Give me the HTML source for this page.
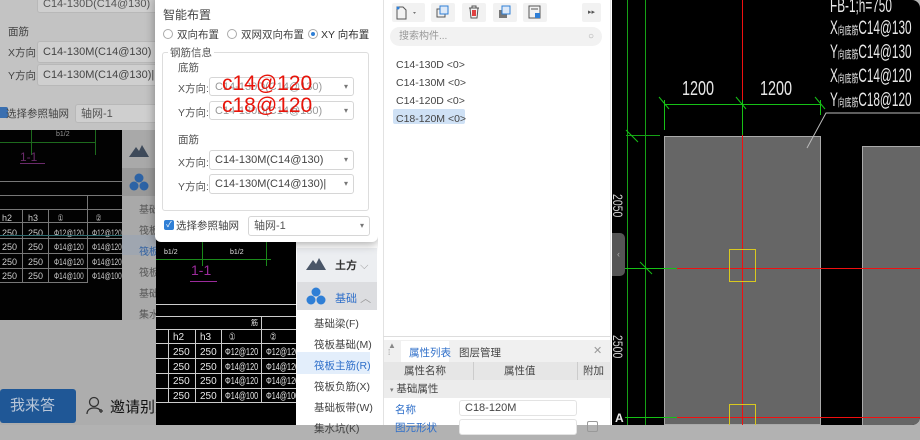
<!DOCTYPE html>
<html><head><meta charset="utf-8">
<style>
*{margin:0;padding:0;box-sizing:border-box;white-space:nowrap}
body{width:920px;height:425px;overflow:hidden;position:relative;background:#b2b2b2;font-family:"Liberation Sans","Noto Sans CJK SC",sans-serif;font-size:11px;color:#333}
.a{position:absolute}
.inp{position:absolute;background:#fff;border:1px solid #d6d6d6;border-radius:3px;font-size:11px;color:#444;padding-left:5px;line-height:18px;overflow:hidden}
.inp.s::after{content:"▾";position:absolute;right:5px;top:0;font-size:8px;color:#777}
.lbl{position:absolute;font-size:10.5px;color:#555}
.cad{position:absolute;background:#000;overflow:hidden}
.w{color:#e8e8e8;font-family:"Liberation Sans Narrow","Liberation Sans",sans-serif}
.nar{transform:scaleX(.72);transform-origin:left top}
</style></head><body>

<!-- dimmed left area -->
<div class="a" style="left:0;top:0;width:160px;height:130px;background:#c3c3c3"></div>
<div class="inp" style="left:37px;top:-6px;width:125px;height:19px;background:#cfcfcf;border-color:#b8b8b8;color:#555">C14-130D(C14@130)</div>
<div class="lbl" style="left:8px;top:24px;color:#444">面筋</div>
<div class="lbl" style="left:8px;top:45px;color:#444">X方向:</div>
<div class="inp" style="left:37px;top:41px;width:125px;height:22px;background:#cfcfcf;border-color:#b8b8b8;color:#444;line-height:20px">C14-130M(C14@130)</div>
<div class="lbl" style="left:8px;top:68px;color:#444">Y方向:</div>
<div class="inp" style="left:37px;top:64px;width:125px;height:22px;background:#cfcfcf;border-color:#b8b8b8;color:#444;line-height:20px">C14-130M(C14@130)|</div>
<div class="a" style="left:-3px;top:107px;width:11px;height:11px;background:#3a6fb0;border-radius:2px"></div>
<div class="lbl" style="left:6px;top:106px;color:#444">选择参照轴网</div>
<div class="inp" style="left:75px;top:104px;width:90px;height:19px;background:#cfcfcf;border-color:#b8b8b8;color:#555">轴网-1</div>

<div class="cad" style="left:0;top:130px;width:122px;height:190px;background:#020202">
  <div class="a" style="left:31px;top:0;width:1px;height:25px;background:#1d6a1d"></div>
  <div class="a" style="left:95px;top:0;width:1px;height:25px;background:#1d6a1d"></div>
  <div class="a" style="left:0;top:12px;width:95px;height:1px;background:#1d6a1d"></div>
  <div class="a w" style="left:56px;top:1px;font-size:7px;color:#999">b1/2</div>
  <div class="a" style="left:20px;top:20px;font-size:12px;color:#6b2b6b">1-1</div>
  <div class="a" style="left:20px;top:33px;width:25px;height:1px;background:#6b2b6b"></div>
  <div class="a" style="left:0;top:51px;width:122px;height:1px;background:#777"></div>
  <div class="a" style="left:0;top:65px;width:122px;height:1px;background:#777"></div>
  <div class="a" style="left:0;top:79px;width:122px;height:1px;background:#777"></div>
  <div class="a" style="left:0;top:92px;width:122px;height:1px;background:#777"></div>
  <div class="a" style="left:0;top:108px;width:122px;height:1px;background:#777"></div>
  <div class="a" style="left:0;top:123px;width:122px;height:1px;background:#777"></div>
  <div class="a" style="left:0;top:138px;width:122px;height:1px;background:#777"></div>
  <div class="a" style="left:0;top:152px;width:88px;height:1px;background:#777"></div>
  <div class="a" style="left:22px;top:79px;width:1px;height:73px;background:#777"></div>
  <div class="a" style="left:48px;top:79px;width:1px;height:73px;background:#777"></div>
  <div class="a" style="left:87px;top:65px;width:1px;height:87px;background:#777"></div>
  <div class="a w" style="left:2px;top:81px;font-size:9px;line-height:14.5px;color:#ccc">h2<br>250<br>250<br>250<br>250</div>
  <div class="a w" style="left:28px;top:81px;font-size:9px;line-height:14.5px;color:#ccc">h3<br>250<br>250<br>250<br>250</div>
  <div class="a w nar" style="left:54px;top:81px;font-size:9px;line-height:14.5px;color:#ccc">&nbsp;&nbsp;①<br>Φ12@120<br>Φ14@120<br>Φ14@120<br>Φ14@100</div>
  <div class="a w nar" style="left:92px;top:81px;font-size:9px;line-height:14.5px;color:#ccc">&nbsp;&nbsp;②<br>Φ12@120<br>Φ14@120<br>Φ14@120<br>Φ14@100</div>
</div>
<div class="a" style="left:0;top:235px;width:122px;height:1px;background:#2d6b70"></div>
<div class="a" style="left:122px;top:130px;width:38px;height:190px;background:#a9a9a9"></div>
<div class="a" style="left:122px;top:168px;width:38px;height:28px;background:#999"></div>
<svg class="a" style="left:129px;top:144px" width="20" height="14" viewBox="0 0 20 14"><path d="M0 13L7 3l3 4 3-6 7 12z" fill="#3e4a5a"/></svg>
<svg class="a" style="left:129px;top:173px" width="20" height="18" viewBox="0 0 20 18"><circle cx="10" cy="5" r="4.5" fill="#2d63a5"/><circle cx="5" cy="13" r="4.5" fill="#2d63a5"/><circle cx="15" cy="13" r="4.5" fill="#2d63a5"/></svg>
<div class="a" style="left:122px;top:235px;width:38px;height:20px;background:#9fa6b0"></div>
<div class="a" style="left:139px;top:200px;font-size:10px;line-height:21px;color:#555">基础<br>筏板<br><span style="color:#3060a0">筏板</span><br>筏板<br>基础<br>集水<br>柱墩</div>
<div class="a" style="left:0;top:320px;width:160px;height:105px;background:#adadad"></div>
<div class="a" style="left:0;top:389px;width:76px;height:34px;background:#1f5796;border-radius:3px;color:#b8c6d8;font-size:15px;line-height:34px;padding-left:10px">我来答</div>
<svg class="a" style="left:86px;top:396px" width="18" height="20" viewBox="0 0 18 20"><circle cx="8" cy="6" r="4.5" fill="none" stroke="#333" stroke-width="1.3"/><path d="M1 18c0-4 3-6 7-6s5 1 6 2M13 15h4M15 13v4" fill="none" stroke="#333" stroke-width="1.3"/></svg>
<div class="a" style="left:110px;top:396px;font-size:15px;color:#111">邀请别人</div>

<!-- bright CAD under dialog -->
<div class="cad" style="left:156px;top:236px;width:140px;height:189px">
  <div class="a" style="left:46px;top:0;width:1px;height:30px;background:#1a8a1a"></div>
  <div class="a" style="left:110px;top:0;width:1px;height:30px;background:#1a8a1a"></div>
  <div class="a" style="left:0;top:23px;width:115px;height:1px;background:#1a8a1a"></div>
  <div class="a w" style="left:8px;top:13px;font-size:7px">b1/2</div>
  <div class="a w" style="left:74px;top:13px;font-size:7px">b1/2</div>
  <div class="a" style="left:35px;top:26px;font-size:14px;color:#9b2b9b">1-1</div>
  <div class="a" style="left:34px;top:45px;width:27px;height:1px;background:#9b2b9b"></div>
  <div class="a" style="left:0;top:68px;width:140px;height:1px;background:#ccc"></div>
  <div class="a" style="left:0;top:80px;width:140px;height:1px;background:#ccc"></div>
  <div class="a" style="left:0;top:93px;width:140px;height:1px;background:#ccc"></div>
  <div class="a" style="left:0;top:107px;width:140px;height:1px;background:#ccc"></div>
  <div class="a" style="left:0;top:122px;width:140px;height:1px;background:#ccc"></div>
  <div class="a" style="left:0;top:137px;width:140px;height:1px;background:#ccc"></div>
  <div class="a" style="left:0;top:152px;width:140px;height:1px;background:#ccc"></div>
  <div class="a" style="left:0;top:166px;width:140px;height:1px;background:#ccc"></div>
  <div class="a" style="left:12px;top:93px;width:1px;height:73px;background:#ccc"></div>
  <div class="a" style="left:39px;top:93px;width:1px;height:73px;background:#ccc"></div>
  <div class="a" style="left:65px;top:93px;width:1px;height:73px;background:#ccc"></div>
  <div class="a" style="left:105px;top:80px;width:1px;height:86px;background:#ccc"></div>
  <div class="a w" style="left:17px;top:95px;font-size:10px;line-height:14.8px">h2<br>250<br>250<br>250<br>250</div>
  <div class="a w" style="left:44px;top:95px;font-size:10px;line-height:14.8px">h3<br>250<br>250<br>250<br>250</div>
  <div class="a w nar" style="left:69px;top:95px;font-size:10px;line-height:14.8px">&nbsp;&nbsp;①<br>Φ12@120<br>Φ14@120<br>Φ14@120<br>Φ14@100</div>
  <div class="a w nar" style="left:110px;top:95px;font-size:10px;line-height:14.8px">&nbsp;&nbsp;②<br>Φ12@120<br>Φ14@120<br>Φ14@120<br>Φ14@100</div>
  <div class="a w" style="left:95px;top:82px;font-size:7px">筋</div>
</div>

<!-- nav -->
<div class="a" style="left:296px;top:236px;width:82px;height:189px;background:#fff"></div>
<div class="a" style="left:297px;top:248px;width:80px;height:34px;background:#eceef1"></div>
<div class="a" style="left:297px;top:282px;width:80px;height:28px;background:#dcdde0"></div>
<svg class="a" style="left:306px;top:257px" width="20" height="14" viewBox="0 0 20 14"><path d="M0 13L7 3l3 4 3-6 7 12z" fill="#4a5668"/></svg>
<div class="a" style="left:335px;top:257px;font-size:11px;font-weight:bold;color:#333">土方 <span style="color:#999;font-weight:normal">⌵</span></div>
<svg class="a" style="left:306px;top:287px" width="20" height="18" viewBox="0 0 20 18"><circle cx="10" cy="5" r="4.5" fill="#2f7fd6"/><circle cx="5" cy="13" r="4.5" fill="#2f7fd6"/><circle cx="15" cy="13" r="4.5" fill="#2f7fd6"/></svg>
<div class="a" style="left:335px;top:290px;font-size:11px;color:#2f6fc9">基础 <span style="color:#999">︿</span></div>
<div class="a" style="left:297px;top:352px;width:73px;height:22px;background:#e3eefb"></div>
<div class="a" style="left:314px;top:314px;font-size:10.5px;line-height:21px;color:#444">基础梁(F)<br>筏板基础(M)<br><span style="color:#2f6fc9">筏板主筋(R)</span><br>筏板负筋(X)<br>基础板带(W)<br>集水坑(K)</div>

<!-- dialog -->
<div class="a" style="left:155px;top:-6px;width:223px;height:248px;background:#fff;border-radius:6px;box-shadow:0 2px 10px rgba(0,0,0,.35)"></div>
<div class="a" style="left:163px;top:6px;font-size:12px;color:#444">智能布置</div>
<div class="a" style="left:163px;top:29px;width:10px;height:10px;border:1px solid #aaa;border-radius:50%"></div>
<div class="a" style="left:177px;top:27px;font-size:10.5px;color:#444">双向布置</div>
<div class="a" style="left:227px;top:29px;width:10px;height:10px;border:1px solid #aaa;border-radius:50%"></div>
<div class="a" style="left:241px;top:27px;font-size:10.5px;color:#444">双网双向布置</div>
<div class="a" style="left:308px;top:29px;width:10px;height:10px;border:1px solid #aaa;border-radius:50%"><div class="a" style="left:2px;top:2px;width:4px;height:4px;background:#2f7fd6;border-radius:50%"></div></div>
<div class="a" style="left:321px;top:27px;font-size:10.5px;color:#333">XY 向布置</div>
<div class="a" style="left:162px;top:52px;width:207px;height:159px;border:1px solid #ddd;border-radius:3px"></div>
<div class="a" style="left:168px;top:45px;background:#fff;padding:0 2px;font-size:10.5px;color:#555">钢筋信息</div>
<div class="lbl" style="left:178px;top:60px">底筋</div>
<div class="lbl" style="left:178px;top:81px">X方向:</div>
<div class="inp s" style="left:209px;top:77px;width:145px;height:19px;color:#999">C14-130D(C14@130)</div>
<div class="lbl" style="left:178px;top:105px">Y方向:</div>
<div class="inp s" style="left:209px;top:101px;width:145px;height:19px;color:#999">C14-130D(C14@130)</div>
<div class="a" style="left:222px;top:73px;font-size:21px;color:#e8140a;line-height:22px">c14@120<br>c18@120</div>
<div class="lbl" style="left:178px;top:132px">面筋</div>
<div class="lbl" style="left:178px;top:155px">X方向:</div>
<div class="inp s" style="left:209px;top:150px;width:145px;height:20px">C14-130M(C14@130)</div>
<div class="lbl" style="left:178px;top:179px">Y方向:</div>
<div class="inp s" style="left:209px;top:174px;width:145px;height:20px">C14-130M(C14@130)|</div>
<div class="a" style="left:164px;top:220px;width:10px;height:10px;background:#2f7fd6;border-radius:2px;color:#fff;font-size:8px;line-height:10px;text-align:center">✓</div>
<div class="a" style="left:176px;top:218px;font-size:10.5px;color:#444">选择参照轴网</div>
<div class="inp s" style="left:248px;top:216px;width:122px;height:20px;color:#555">轴网-1</div>

<!-- component panel -->
<div class="a" style="left:378px;top:0;width:234px;height:425px;background:#fff"></div>
<div class="a" style="left:383px;top:0;width:1px;height:425px;background:#e2e2e2"></div>
<div class="a" style="left:610px;top:0;width:1px;height:425px;background:#e2e2e2"></div>
<div class="a" style="left:392px;top:3px;width:33px;height:19px;background:#f2f2f2;border-radius:2px"></div>
<svg class="a" style="left:396px;top:6px" width="26" height="14" viewBox="0 0 26 14"><path d="M1 1h6l3 3v9H1z" fill="none" stroke="#555"/><circle cx="2" cy="2" r="1.5" fill="#2f7fd6"/><path d="M17 6h3l-1.5 2z" fill="#777"/></svg>
<div class="a" style="left:431px;top:3px;width:24px;height:19px;background:#f2f2f2;border-radius:2px"></div>
<svg class="a" style="left:436px;top:5px" width="14" height="14" viewBox="0 0 14 14"><rect x="1" y="4" width="8" height="8" fill="none" stroke="#555"/><rect x="4" y="1" width="8" height="8" fill="#dde9f8" stroke="#2f7fd6"/></svg>
<div class="a" style="left:462px;top:3px;width:24px;height:19px;background:#f2f2f2;border-radius:2px"></div>
<svg class="a" style="left:467px;top:5px" width="14" height="14" viewBox="0 0 14 14"><path d="M2 3h10M5 3V1h4v2M3 3l1 10h6l1-10" fill="none" stroke="#555"/><rect x="5" y="5" width="4" height="6" fill="#e04040"/></svg>
<div class="a" style="left:493px;top:3px;width:24px;height:19px;background:#f2f2f2;border-radius:2px"></div>
<svg class="a" style="left:498px;top:5px" width="14" height="14" viewBox="0 0 14 14"><rect x="1" y="5" width="8" height="8" fill="#777"/><rect x="4" y="1" width="8" height="8" fill="#dde9f8" stroke="#2f7fd6"/></svg>
<div class="a" style="left:523px;top:3px;width:24px;height:19px;background:#f2f2f2;border-radius:2px"></div>
<svg class="a" style="left:528px;top:5px" width="14" height="14" viewBox="0 0 14 14"><rect x="1" y="1" width="11" height="12" fill="none" stroke="#555"/><path d="M3 4h7" stroke="#555"/><rect x="7" y="8" width="5" height="5" fill="#2f7fd6"/></svg>
<div class="a" style="left:582px;top:3px;width:19px;height:19px;background:#f2f2f2;border-radius:2px;text-align:center;color:#555;font-size:7px;line-height:19px">▸▸</div>
<div class="a" style="left:390px;top:27px;width:212px;height:19px;background:#f2f2f2;border-radius:10px;font-size:10px;color:#999;padding-left:9px;line-height:19px">搜索构件...<span style="position:absolute;right:8px;color:#aaa">○</span></div>
<div class="a" style="left:393px;top:109px;width:72px;height:15px;background:#cfe1f5;border-radius:2px"></div>
<div class="a" style="left:396px;top:56px;font-size:10.5px;line-height:18px;color:#444">C14-130D &lt;0&gt;<br>C14-130M &lt;0&gt;<br>C14-120D &lt;0&gt;<br>C18-120M &lt;0&gt;</div>
<div class="a" style="left:383px;top:336px;width:228px;height:1px;background:#ddd"></div>
<div class="a" style="left:384px;top:340px;width:226px;height:22px;background:#f0f0f0"></div>
<div class="a" style="left:388px;top:342px;font-size:8px;color:#888;line-height:7px">▲<br>⁞</div>
<div class="a" style="left:401px;top:341px;width:48px;height:21px;background:#fff"></div>
<div class="a" style="left:409px;top:345px;font-size:10.5px;color:#2f6fc9">属性列表</div>
<div class="a" style="left:459px;top:345px;font-size:10.5px;color:#444">图层管理</div>
<div class="a" style="left:593px;top:344px;font-size:11px;color:#999">✕</div>
<div class="a" style="left:384px;top:362px;width:226px;height:18px;background:#e6e6e6;font-size:10.5px;color:#444;line-height:18px"><span class="a" style="left:20px">属性名称</span><span class="a" style="left:120px">属性值</span><span class="a" style="left:199px">附加</span></div>
<div class="a" style="left:473px;top:362px;width:1px;height:18px;background:#ccc"></div>
<div class="a" style="left:577px;top:362px;width:1px;height:18px;background:#ccc"></div>
<div class="a" style="left:384px;top:380px;width:226px;height:18px;background:#ececec;font-size:10.5px;color:#444;line-height:18px;padding-left:6px"><span style="font-size:7px;color:#777">▾</span> 基础属性</div>
<div class="a" style="left:395px;top:402px;font-size:10.5px;color:#2f6fc9">名称</div>
<div class="inp" style="left:459px;top:400px;width:118px;height:16px;line-height:14px;border-color:#e3e3e3">C18-120M</div>
<div class="a" style="left:395px;top:420px;font-size:10.5px;color:#2f6fc9">图元形状</div>
<div class="inp" style="left:459px;top:419px;width:118px;height:16px;border-color:#e3e3e3"></div>
<div class="a" style="left:587px;top:421px;width:11px;height:11px;border:1px solid #999;border-radius:2px"></div>

<!-- right CAD -->
<div class="cad" style="left:612px;top:0;width:308px;height:425px;border-radius:0 8px 8px 0">
  <div class="a" style="left:15px;top:0;width:1px;height:425px;background:#16a016"></div>
  <div class="a" style="left:33px;top:0;width:1px;height:425px;background:#16a016"></div>
  <div class="a" style="left:14px;top:135px;width:34px;height:1px;background:#16a016"></div>
  <div class="a" style="left:52px;top:136px;width:157px;height:289px;background:#666;border:1px solid #aaa"></div>
  <div class="a" style="left:250px;top:146px;width:70px;height:290px;background:#666;border:1px solid #aaa"></div>
  <div class="a" style="left:52px;top:104px;width:157px;height:1px;background:#16c016"></div>
  <div class="a" style="left:52px;top:100px;width:1px;height:30px;background:#16c016"></div>
  <div class="a" style="left:208px;top:100px;width:1px;height:15px;background:#16c016"></div>
  <div class="a w nar" style="left:70px;top:78px;font-size:20px">1200</div>
  <div class="a w nar" style="left:148px;top:78px;font-size:20px">1200</div>
  <div class="a" style="left:130px;top:0;width:1px;height:425px;background:#f01010"></div>
  <div class="a" style="left:130px;top:100px;width:1px;height:35px;background:#16c016"></div>
  <div class="a" style="left:65px;top:268px;width:243px;height:1px;background:#f01010"></div>
  <div class="a" style="left:65px;top:417px;width:243px;height:1px;background:#f01010"></div>
  <div class="a" style="left:13px;top:268px;width:52px;height:1px;background:#16c016"></div>
  <div class="a" style="left:13px;top:417px;width:52px;height:1px;background:#16c016"></div>
  <div class="a" style="left:117px;top:249px;width:27px;height:33px;border:1px solid #d8c820"></div>
  <div class="a" style="left:117px;top:404px;width:27px;height:30px;border:1px solid #d8c820"></div>
  <svg class="a" style="left:0;top:0" width="308" height="425"><path d="M195 148L214 113H308" stroke="#bbb" fill="none"/><path d="M47 97l10 12M124 97l10 12M203 97l10 12M14 130l12 12M28 262l12 12" stroke="#16c016"/></svg>
  <div class="a w nar" style="left:218px;top:-4px;font-size:19px;line-height:22px;transform:scaleX(.62)">FB-1;h=750<br>X<span style="font-size:11px">向底筋</span>C14@130<br>Y<span style="font-size:11px">向底筋</span>C14@130<br>X<span style="font-size:11px">向底筋</span>C14@120<br>Y<span style="font-size:11px">向底筋</span>C18@120</div>
  <div class="a w" style="left:14px;top:194px;font-size:14px;color:#ccc;transform:rotate(90deg) scaleX(.75);transform-origin:left top">2050</div>
  <div class="a w" style="left:14px;top:335px;font-size:14px;color:#ccc;transform:rotate(90deg) scaleX(.75);transform-origin:left top">2500</div>
  <div class="a" style="left:0;top:233px;width:13px;height:43px;background:#555;border-radius:0 5px 5px 0;color:#aaa;font-size:9px;line-height:43px;text-align:center">‹</div>
  <div class="a w" style="left:3px;top:411px;font-size:12px;font-weight:bold">A</div>
</div>
</body></html>
